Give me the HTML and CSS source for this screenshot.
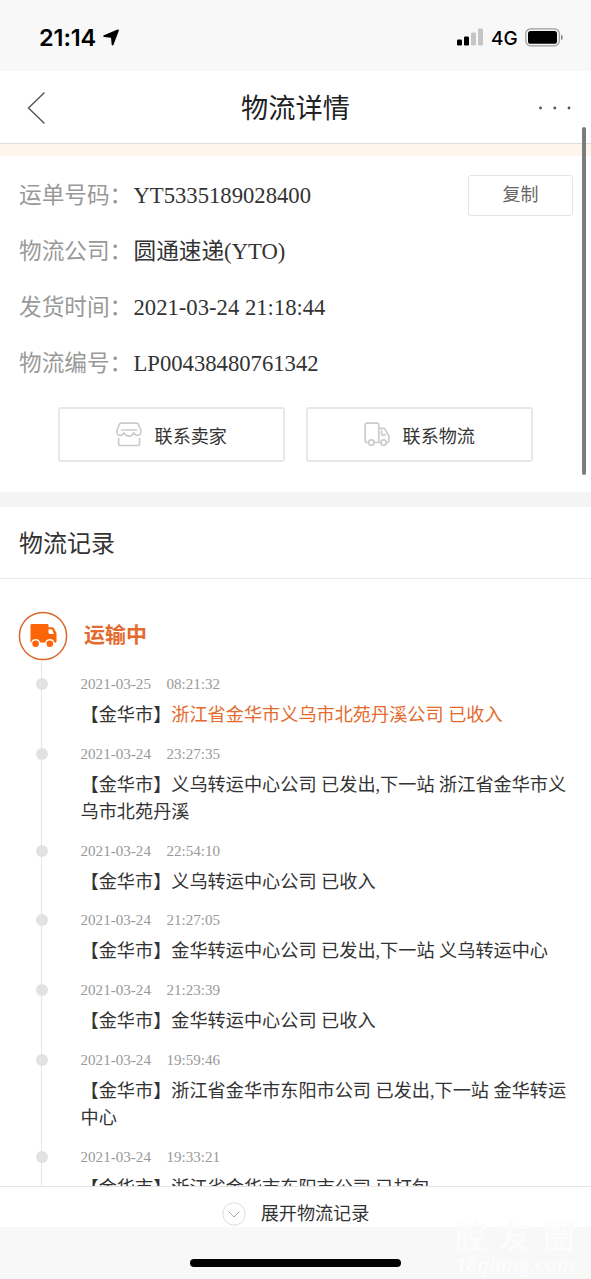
FILE: index.html
```html
<!DOCTYPE html>
<html lang="zh-CN">
<head>
<meta charset="utf-8">
<title>物流详情</title>
<link rel="stylesheet" href="styles.css">
</head>
<body>
<div class="screen">
  <div class="status">
    <div class="status-left">
      <span class="clock">21:14</span>
      <svg class="locate" width="17" height="17" viewBox="0 0 17 17"><path d="M14.600.6.900 6.200Q-.5 7.300 1 8.100l7 .6.700 7q.8 1.500 1.800.1L15.800 1.700Q16 .2 14.600.6z"/></svg>
    </div>
    <div class="status-right">
      <svg width="27" height="18" viewBox="0 0 27 18"><rect x="0" y="11.500" width="5" height="6" rx="1.200"/><rect x="7" y="8.500" width="5" height="9" rx="1.200"/><g fill="#c6c6c6"><rect x="14" y="4.500" width="5" height="13" rx="1.200"/><rect x="21" y=".5" width="5" height="17" rx="1.200"/></g></svg>
      <span class="net">4G</span>
      <svg width="39" height="19" viewBox="0 0 39 19"><rect x=".8" y=".8" width="33.500" height="17" rx="4.800" fill="none" stroke="#999" stroke-width="1.200"/><rect x="3" y="3" width="29" height="12.800" rx="2.600"/><path d="M36 6.500c2.400 1 2.400 4.800 0 5.800z" fill="#888"/></svg>
    </div>
  </div>
  <header class="navbar">
    <svg width="20" height="34" viewBox="0 0 20 34"><path d="M17.500 1.500 1.500 17l16 15.500" fill="none" stroke="#555" stroke-width="1.400"/></svg>
    <h1 class="title">物流详情</h1>
    <svg width="34" height="4" viewBox="0 0 34 4" fill="#555"><circle cx="1.500" cy="2" r="1.400"/><circle cx="15.800" cy="2" r="1.400"/><circle cx="30" cy="2" r="1.400"/></svg>
  </header>
  <div class="notice"></div>
  <section class="info">
    <div class="row"><span class="label">运单号码：</span><span class="value">YT5335189028400</span><button class="copy">复制</button></div>
    <div class="row"><span class="label">物流公司：</span><span class="value">圆通速递(YTO)</span></div>
    <div class="row"><span class="label">发货时间：</span><span class="value">2021-03-24 21:18:44</span></div>
    <div class="row"><span class="label">物流编号：</span><span class="value">LP00438480761342</span></div>
    <div class="actions">
      <button class="action"><svg width="26" height="25" viewBox="0 0 26 25"><g class="outline"><path d="M5 1.200h15.500q1.200 0 1.700 1l2.700 6.300q.3 4.500-3.200 4.800-2.700 0-4-2.500-1.600 3.300-4.800 3.300T8.100 10.800q-1.300 2.500-4 2.500Q.6 13 .9 8.500l2.500-6.300q.4-1 1.600-1z"/><path d="M5.500 8h15.200M2.600 16.500v5q0 2 2 2h17q2 0 2-2v-5"/></g></svg>联系卖家</button>
      <button class="action"><svg width="26" height="25" viewBox="0 0 26 25"><g class="outline"><path d="M4.500 20.500H2.900q-1.700 0-1.700-1.700v-16q0-1.600 1.600-1.600h10.400q1.600 0 1.600 1.600v17.700M10.300 20.500h6.500M14.800 6.300h4.800q.9 0 1.400.8l3.900 7v4.900q0 1.500-1.500 1.500h-.9M17.500 8.800v4h3.800"/><circle cx="7.400" cy="20.600" r="2.800"/><circle cx="19.700" cy="20.600" r="2.800"/></g></svg>联系物流</button>
    </div>
  </section>
  <section class="records">
    <h2 class="heading">物流记录</h2>
    <div class="timeline">
      <div class="state">
        <svg width="50" height="50" viewBox="0 0 50 50"><circle cx="25" cy="25" r="23.600" fill="#fff" stroke="#d9682e" stroke-width="1.500"/><path fill="#fb6407" d="M12.500 14.200q0-1.200 1.200-1.200h15.600q1.200 0 1.200 1.200v2h3.700q1.200 0 1.700 1l2.600 4.700v8.500q0 1.100-1.100 1.100h-1a4.800 4.800 0 0 0-9.200 0h-4.900a4.800 4.800 0 0 0-9.200 0h-.6z"/><path d="M30.500 18.200h2.700q.7 0 1 .6l1.900 4.200h-4q-1.600 0-1.600-1.600z" fill="#fff"/><circle cx="17.600" cy="32.800" r="3.300" fill="#fb6407"/><circle cx="31.800" cy="32.800" r="3.300" fill="#fb6407"/></svg>
        <span>运输中</span>
      </div>
      <ol class="events">
        <li class="event"><time>2021-03-25<i></i>08:21:32</time><p>【金华市】<em>浙江省金华市义乌市北苑丹溪公司 已收入</em></p></li>
        <li class="event"><time>2021-03-24<i></i>23:27:35</time><p>【金华市】义乌转运中心公司 已发出,下一站 浙江省金华市义乌市北苑丹溪</p></li>
        <li class="event"><time>2021-03-24<i></i>22:54:10</time><p>【金华市】义乌转运中心公司 已收入</p></li>
        <li class="event"><time>2021-03-24<i></i>21:27:05</time><p>【金华市】金华转运中心公司 已发出,下一站 义乌转运中心</p></li>
        <li class="event"><time>2021-03-24<i></i>21:23:39</time><p>【金华市】金华转运中心公司 已收入</p></li>
        <li class="event"><time>2021-03-24<i></i>19:59:46</time><p>【金华市】浙江省金华市东阳市公司 已发出,下一站 金华转运中心</p></li>
        <li class="event"><time>2021-03-24<i></i>19:33:21</time><p>【金华市】浙江省金华市东阳市公司 已打包</p></li>
      </ol>
    </div>
  </section>
  <button class="expand"><svg width="24" height="24" viewBox="0 0 24 24" fill="none"><circle cx="12" cy="12" r="11.200" stroke="#ddd"/><path d="m6.500 9.500 5.500 5.500 5.500-5.500" stroke="#aaa"/></svg><span>展开物流记录</span></button>
  <div class="home"><div class="home-bar"></div></div>
  <div class="watermark"><b>腔友圈</b><span>18qiang.com</span></div>
  <div class="scrollbar"></div>
</div>
</body>
</html>
```
FILE: styles.css
```css
* { box-sizing: border-box; margin: 0; padding: 0; }
body { background: #fff; font-family: "Liberation Serif", "Noto Sans CJK SC", serif; color: #333; }
button { font: inherit; color: inherit; background: #fff; border: 0; }
svg { display: block; flex: none; }
.screen { position: relative; width: 591px; height: 1279px; overflow: hidden; display: flex; flex-direction: column; }

.status { flex: none; height: 71px; background: #f8f8f8; display: flex; justify-content: space-between; padding: 2px 27px 0 39px; align-items: center; font-family: Inter, sans-serif; color: #000; }
.status-left, .status-right { display: flex; align-items: center; }
.status-left { gap: 7px; padding-top: 3px; }
.clock { font-size: 23.500px; line-height: 28px; font-weight: 600; letter-spacing: -.1px; }
.locate { margin-bottom: 2px; }
.status-right { gap: 7px; padding-top: 1px; }
.net { font-size: 19px; line-height: 24px; font-weight: 500; width: 27px; padding-top: 3px; }

.navbar { flex: none; height: 73px; border-bottom: 1px solid #ddd; display: flex; align-items: center; justify-content: space-between; padding: 1px 18px 0 27px; }
.title { font-size: 27.2px; line-height: 40px; font-weight: 400; color: #222; margin-left: 6px; padding: 2px 1px 0 0; }
.notice { flex: none; height: 12px; background: #fef5ed; }

.info { flex: none; height: 351px; padding: 12px 18px 0 19px; border-bottom: 15px solid #f4f4f4; }
.row { height: 56px; display: flex; align-items: center; font-size: 22.670px; line-height: 34px; }
.label { color: #999; width: 114.500px; white-space: nowrap; }
.copy { margin: 0 0 2px auto; width: 105px; height: 41px; border: 1.500px solid #e5e5e5; border-radius: 3px; font-size: 18px; line-height: 37px; color: #666; }
.actions { display: flex; justify-content: center; gap: 21px; padding: 15px 1px 0 0; }
.action { width: 227px; height: 55px; border: 2px solid #e8e8e8; border-radius: 3px; display: flex; align-items: center; justify-content: center; gap: 12.500px; font-size: 18.130px; }
.outline { fill: none; stroke: #ccc; stroke-width: 1.700; stroke-linejoin: round; stroke-linecap: round; }

.records { flex: 1; min-height: 0; overflow: hidden; }
.heading { height: 72px; border-bottom: 1px solid #e9e9e9; padding-left: 19px; font-size: 24px; line-height: 74px; font-weight: 400; }
.timeline { padding: 32px 18px 0 17.500px; }
.state { display: flex; align-items: center; gap: 16.500px; height: 50px; color: #e46a2d; font-size: 21px; font-weight: 700; line-height: 30px; }
.state span { margin-bottom: 2px; }
.events { list-style: none; margin-left: 23.500px; padding: 10px 0 20px 38.500px; border-left: 1px solid #e4e4e4; }
.event { position: relative; padding-bottom: 11.500px; }
.event::before { content: ""; position: absolute; left: -44.500px; top: 7px; width: 12px; height: 12px; border-radius: 50%; background: #e2e2e2; }
.event time { display: block; height: 31px; font-size: 15.100px; line-height: 26px; color: #999; }
.event i { display: inline-block; width: 15.500px; }
.event p { font-size: 18.160px; line-height: 27.200px; }
.event em { font-style: normal; color: #e46a2d; }

.expand { flex: none; height: 41px; border-top: 1px solid #e4e4e4; display: flex; align-items: center; justify-content: center; gap: 15px; font-size: 18.130px; padding-top: 13px; }
.expand span { margin-bottom: 3px; }
.home { flex: none; height: 52px; background: #f8f8f8; padding-top: 32px; }
.home-bar { width: 211px; height: 8px; border-radius: 4px; margin: 0 auto; background: #000; }
.watermark { position: absolute; left: 453px; top: 1218px; width: 124px; color: #fcfcfc; display: flex; flex-direction: column; align-items: center; font-family: "Open Sans", "Noto Sans CJK SC", sans-serif; }
.watermark b { font-size: 32px; line-height: 36px; letter-spacing: 12px; margin-right: -12px; }
.watermark span { font-size: 20px; line-height: 22px; font-weight: 700; font-style: italic; }
.scrollbar { position: absolute; left: 582px; top: 127px; width: 4px; height: 348px; border-radius: 2px; background: #7c7c7c; }
```
